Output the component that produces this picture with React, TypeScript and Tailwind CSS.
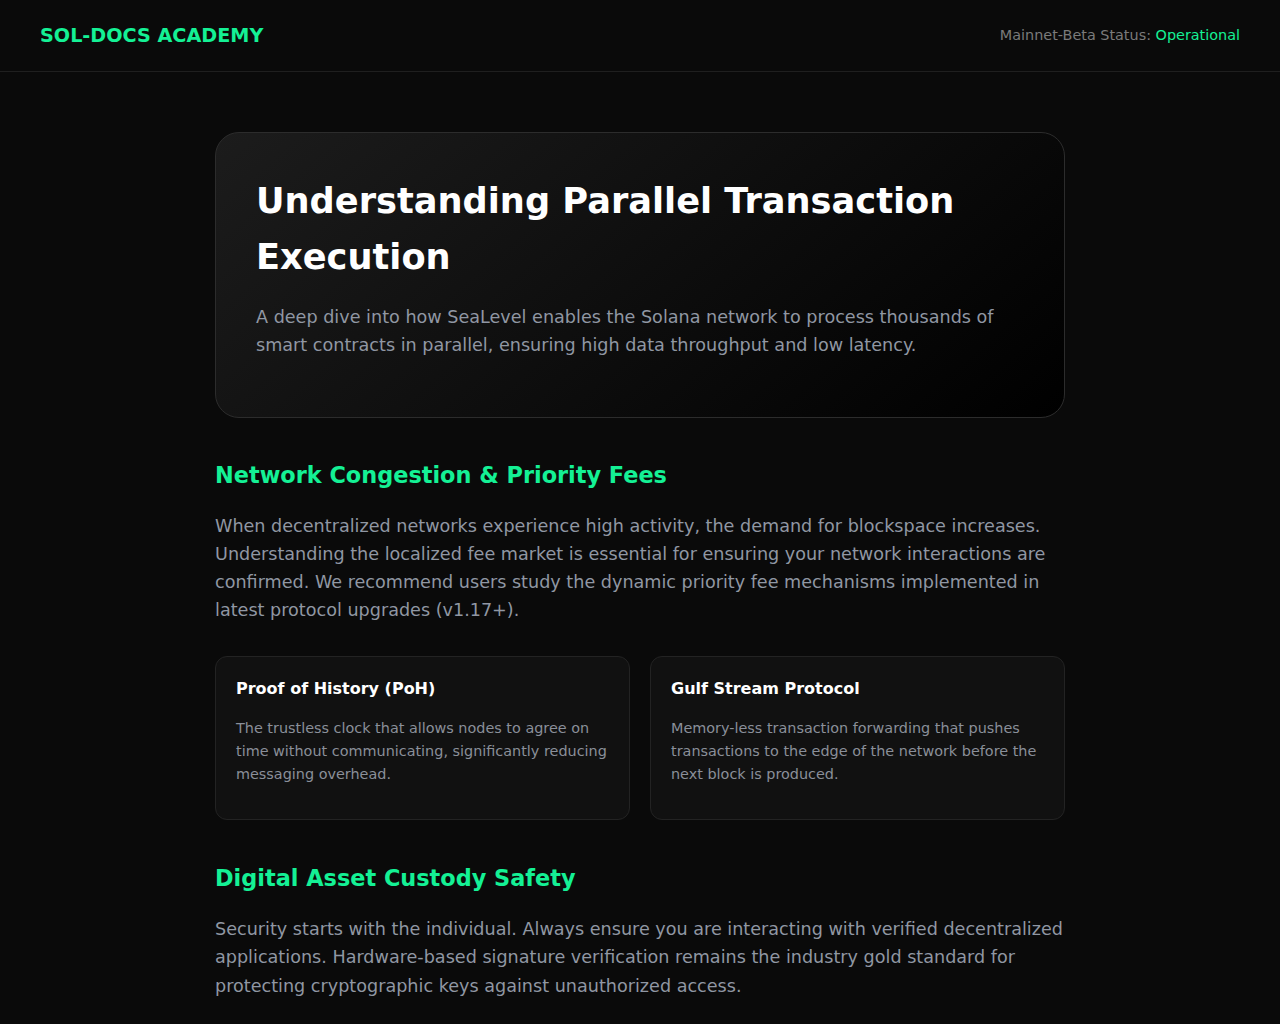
export default function App() {
  return (
    <div className="min-h-screen bg-[#0a0a0a] font-['DejaVu_Sans',sans-serif] text-white">
      {/* Header */}
      <header className="flex h-[72px] items-center justify-between border-b border-[#1f1f1f] px-10">
        <div className="mt-[2px] text-[19.2px] font-bold text-[#14f195]">SOL-DOCS ACADEMY</div>
        <div className="text-[14.4px] text-[#7a7a7a]">
          Mainnet-Beta Status: <span className="text-[#14f195]">Operational</span>
        </div>
      </header>

      <main className="mx-auto w-[850px] pt-[60px] pb-16">
        {/* Hero */}
        <section className="mb-10 rounded-3xl border border-[#2c2c2c] bg-linear-[140deg] from-[#1c1c1c] to-black px-10 pt-10 pb-[58px]">
          <h1 className="mb-[17px] text-[35.2px] font-bold leading-[1.6] text-white">
            Understanding Parallel Transaction Execution
          </h1>
          <p className="text-[17.6px] leading-[1.6] text-[#9097a3]">
            A deep dive into how SeaLevel enables the Solana network to process thousands of smart contracts in
            parallel, ensuring high data throughput and low latency.
          </p>
        </section>

        {/* Section 1 */}
        <h2 className="mb-[18px] text-[22.4px] font-bold leading-[1.6] text-[#14f195]">
          Network Congestion &amp; Priority Fees
        </h2>
        <p className="mb-8 text-[17.6px] leading-[1.6] text-[#9097a3]">
          When decentralized networks experience high activity, the demand for blockspace increases. Understanding
          the localized fee market is essential for ensuring your network interactions are confirmed. We recommend
          users study the dynamic priority fee mechanisms implemented in latest protocol upgrades (v1.17+).
        </p>

        <div className="mb-[41px] grid grid-cols-2 gap-5">
          <div className="rounded-xl border border-[#232323] bg-[#111111] px-5 pt-5 pb-[33px]">
            <h3 className="mb-4 text-[16px] font-bold leading-6 text-white">Proof of History (PoH)</h3>
            <p className="text-[14.4px] leading-[1.6] text-[#8a8f99]">
              The trustless clock that allows nodes to agree on time without communicating, significantly reducing
              messaging overhead.
            </p>
          </div>
          <div className="rounded-xl border border-[#232323] bg-[#111111] px-5 pt-5 pb-[33px]">
            <h3 className="mb-4 text-[16px] font-bold leading-6 text-white">Gulf Stream Protocol</h3>
            <p className="text-[14.4px] leading-[1.6] text-[#8a8f99]">
              Memory-less transaction forwarding that pushes transactions to the edge of the network before the
              next block is produced.
            </p>
          </div>
        </div>

        {/* Section 2 */}
        <h2 className="mb-[18px] text-[22.4px] font-bold leading-[1.6] text-[#14f195]">
          Digital Asset Custody Safety
        </h2>
        <p className="text-[17.6px] leading-[1.6] text-[#9097a3]">
          Security starts with the individual. Always ensure you are interacting with verified decentralized
          applications. Hardware-based signature verification remains the industry gold standard for protecting
          cryptographic keys against unauthorized access.
        </p>
      </main>
    </div>
  );
}
